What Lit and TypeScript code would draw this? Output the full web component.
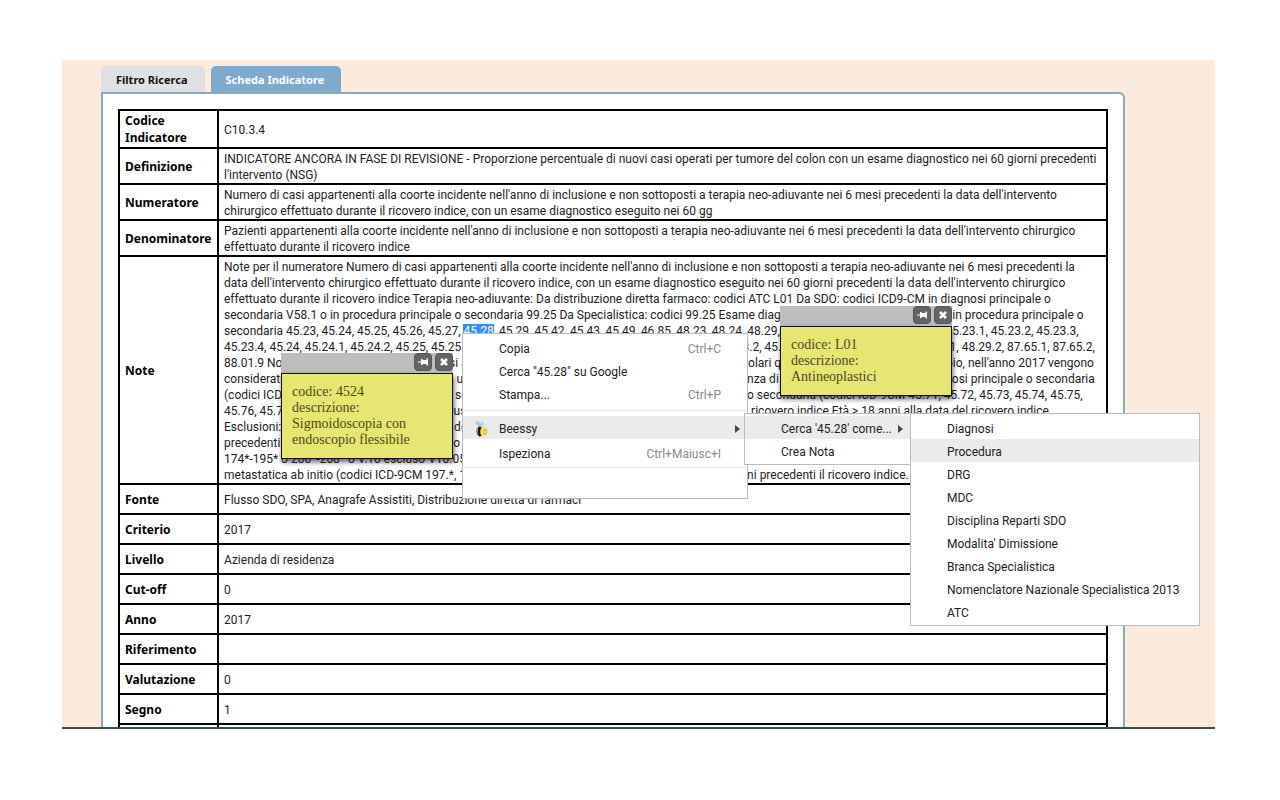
import { LitElement, html, css, svg, nothing } from "lit";
import { customElement, property } from "lit/decorators.js";
import { classMap } from "lit/directives/class-map.js";

interface Row {
  label: string;
  lines: unknown[];
}

interface MenuEntry {
  label: string;
  shortcut?: string;
  active?: boolean;
  submenu?: boolean;
  icon?: unknown;
}

const bee = svg`
  <ellipse cx="4.500" cy="2.800" rx="3.600" ry="1.900" transform="rotate(30 4.500 2.800)" fill="#a9cfdb"/>
  <ellipse cx="8.400" cy="3" rx="1.500" ry="2.600" fill="#b9d9e2"/>
  <path d="M5.500 5.500c-3.500 1-4 6-1.500 9l3.500 1-1-9z" fill="#3a3720"/>
  <path d="M4.200 7.200c-1 1.800-1 4.200 .2 6" stroke="#dccf62" stroke-width="1" fill="none"/>
  <ellipse cx="9.300" cy="10.600" rx="4.400" ry="4.600" fill="#eadf55"/>
  <path d="M6.800 6c-2.300 2.200-2.400 6.500-.4 9" stroke="#17160e" stroke-width="2.400" fill="none"/>
  <path d="M10 9.200h2.400M9.300 12.300c1.500.9 2.900.5 3.600-.6" stroke="#9c8c26" stroke-width=".8" fill="none"/>`;

const rows: Row[] = [
  { label: "Codice Indicatore", lines: ["C10.3.4"] },
  {
    label: "Definizione",
    lines: [
      "INDICATORE ANCORA IN FASE DI REVISIONE - Proporzione percentuale di nuovi casi operati per tumore del colon con un esame diagnostico nei 60 giorni precedenti",
      "l'intervento (NSG)",
    ],
  },
  {
    label: "Numeratore",
    lines: [
      "Numero di casi appartenenti alla coorte incidente nell'anno di inclusione e non sottoposti a terapia neo-adiuvante nei 6 mesi precedenti la data dell'intervento",
      "chirurgico effettuato durante il ricovero indice, con un esame diagnostico eseguito nei 60 gg",
    ],
  },
  {
    label: "Denominatore",
    lines: [
      "Pazienti appartenenti alla coorte incidente nell'anno di inclusione e non sottoposti a terapia neo-adiuvante nei 6 mesi precedenti la data dell'intervento chirurgico",
      "effettuato durante il ricovero indice",
    ],
  },
  {
    label: "Note",
    lines: [
      "Note per il numeratore Numero di casi appartenenti alla coorte incidente nell'anno di inclusione e non sottoposti a terapia neo-adiuvante nei 6 mesi precedenti la",
      "data dell'intervento chirurgico effettuato durante il ricovero indice, con un esame diagnostico eseguito nei 60 giorni precedenti la data dell'intervento chirurgico",
      "effettuato durante il ricovero indice Terapia neo-adiuvante: Da distribuzione diretta farmaco: codici ATC L01 Da SDO: codici ICD9-CM in diagnosi principale o",
      "secondaria V58.1 o in procedura principale o secondaria 99.25 Da Specialistica: codici 99.25 Esame diagnostico Da SDO codici ICD9-CM in procedura principale o",
      html`secondaria 45.23, 45.24, 45.25, 45.26, 45.27, <mark class="selection">45.28</mark>, 45.29, 45.42, 45.43, 45.49, 46.85, 48.23, 48.24, 48.29, 48.35, 48.36. Da Specialistica: 45.23.1, 45.23.2, 45.23.3,`,
      "45.23.4, 45.24, 45.24.1, 45.24.2, 45.25, 45.25.1, 45.26, 45.27, 45.28, 45.28.1, 45.29.1, 45.29.2, 45.43.2, 45.44, 45.49, 45.49.1, 48.23, 48.29.1, 48.29.2, 87.65.1, 87.65.2,",
      "88.01.9 Note per tutti denominatore dei casi appartenenti incidente considerano i operati nei particolari quali tumori e casi sedi ad esempio, nell'anno 2017 vengono",
      "considerati i ricoveri solo in per tumore con un intervento per tumore del in ordinario o con la presenza di tumore colon in delle diag diagnosi principale o secondaria",
      "(codici ICD-9CM 153.*) sede o diagnosi del sede principale intervento regime procedura principale o secondaria (codici ICD-9CM 45.71, 45.72, 45.73, 45.74, 45.75,",
      "45.76, 45.79, 45.8, 48.5, codici e o Incl. esclusi i ricoveri dei residenti fuori casi con ammissione del ricovero indice Età > 18 anni alla data del ricovero indice.",
      "Esclusioni: ricoveri un tumore del colon nei dei cinque anni",
      "precedenti il ricovero indice per tumore del o e pazienti con",
      "174*-195* o 200*-208* o V.10 escluso V10.05 nei",
      "metastatica ab initio (codici ICD-9CM 197.*, 198.*) nel ricovero nei ricoveri dei cinque dodici per anni precedenti il ricovero indice.",
    ],
  },
  { label: "Fonte", lines: ["Flusso SDO, SPA, Anagrafe Assistiti, Distribuzione diretta di farmaci"] },
  { label: "Criterio", lines: ["2017"] },
  { label: "Livello", lines: ["Azienda di residenza"] },
  { label: "Cut-off", lines: ["0"] },
  { label: "Anno", lines: ["2017"] },
  { label: "Riferimento", lines: [] },
  { label: "Valutazione", lines: ["0"] },
  { label: "Segno", lines: ["1"] },
  { label: "", lines: [] },
];

@customElement("sticky-note")
class StickyNote extends LitElement {
  @property({ attribute: false }) lines: string[] = [];

  static styles = css`
    :host { display: block; width: 172px; }
    .bar { display: flex; justify-content: flex-end; gap: 3px; height: 20px; background: #bdbdbd; }
    .tool {
      display: grid; place-items: center; width: 18px; height: 18px; padding: 0;
      border: 1px solid #555; border-radius: 4px; background: #646464;
    }
    .tool svg { display: block; width: 12px; height: 12px; fill: #fff; }
    .body {
      padding: 10px; border: 1px solid #111; background: #e8e672;
      box-shadow: 1px 3px 5px rgba(0, 0, 0, 0.6);
      color: #4c4a1c; font: 14px/16px "Liberation Serif", serif;
    }
    .line { display: block; white-space: nowrap; }
  `;

  render() {
    return html`
      <div class="bar">
        <button class="tool" aria-label="Fissa nota">
          <svg viewBox="0 0 12 12"><path d="M1 5.500h3v-2.500h1.200l.8 1h3.500v-1.500h1.500v7h-1.500v-1.500h-3.500l-.8 1h-1.200v-2.500h-3z"/></svg>
        </button>
        <button class="tool" aria-label="Chiudi nota">
          <svg viewBox="0 0 12 12"><path d="M3 3l6 6M9 3l-6 6" stroke="#fff" stroke-width="2.600"/></svg>
        </button>
      </div>
      <div class="body">${this.lines.map((l) => html`<span class="line">${l}</span>`)}</div>
    `;
  }
}

@customElement("app-root")
class AppRoot extends LitElement {
  static styles = css`
    :host {
      display: flex; box-sizing: border-box; height: 100vh; padding: 60px 65px 71px 62px;
      background: #fff; color: #222; font: 12px/16px Roboto, sans-serif;
    }
    .stage {
      position: relative; flex: 1; display: flex; flex-direction: column; min-width: 0;
      background: #fcebdc; border-bottom: 2px solid #3b504d;
    }
    .viewport { flex: 1; min-height: 0; overflow: hidden; padding: 6px 90px 0 39px; }
    .tabs { display: flex; gap: 6px; }
    .tab {
      height: 26px; padding: 0 17px 0 15px; border: 0; border-radius: 5px 5px 0 0;
      background: #dfe1e4; color: #111; font: bold 11px/28px "Noto Sans", sans-serif;
    }
    .tab.current { background: #7faad0; color: #fff; }
    .panel { border: 2px solid #8aaac2; border-radius: 0 6px 0 0; background: #fff; padding: 15px; }
    .sheet { width: 100%; border-collapse: collapse; table-layout: fixed; }
    .label-col { width: 99px; }
    th, td { box-sizing: border-box; height: 30px; border: 2px solid #000; text-align: left; vertical-align: middle; }
    th { padding: 1px 5px; color: #000; font: bold 12px/17px "Noto Sans", sans-serif; }
    td { padding: 2px 5px 0; }
    .line { display: block; white-space: nowrap; }
    .selection { background: #3390f5; color: #fff; }
    .note { position: absolute; }
    .note.first { left: 219px; top: 293px; }
    .note.second { left: 718px; top: 246px; }
    .menu {
      position: absolute; box-sizing: border-box; padding: 2px 0;
      border: 1px solid #b9bcbf; background: #fff; color: #222;
    }
    .menu.context { left: 400px; top: 273px; width: 286px; height: 166px; }
    .menu.beessy { left: 682px; top: 353px; width: 167px; }
    .menu.lookup { left: 848px; top: 353px; width: 290px; }
    .item {
      display: grid; grid-template-columns: 36px 1fr auto; align-items: center; width: 100%; height: 23px;
      padding: 2px 26px 0 0; border: 0; background: none; color: inherit; font: inherit; text-align: left; white-space: nowrap;
    }
    .item.active { background: #ebebeb; }
    .item.parent { padding-right: 7px; }
    .shortcut { color: #8a8a8a; }
    .icon { display: grid; justify-content: center; }
    .icon svg { display: block; width: 15px; height: 16px; }
    .arrow { width: 5px; height: 8px; fill: #444; }
    .rule { height: 1px; margin: 5px 1px; border: 0; background: #e3e3e3; }
    .rule.tight { margin: 3px 1px; }
    .gap { height: 2px; }
  `;

  private item(e: MenuEntry) {
    return html`<button class=${classMap({ item: true, active: !!e.active, parent: !!e.submenu })} role="menuitem">
      <span class="icon">${e.icon ? html`<svg viewBox="0 0 15 16">${e.icon}</svg>` : nothing}</span>
      <span>${e.label}</span>
      ${e.shortcut ? html`<span class="shortcut">${e.shortcut}</span>` : nothing}
      ${e.submenu ? html`<svg class="arrow" viewBox="0 0 5 8"><path d="M0 0l5 4l-5 4z"/></svg>` : nothing}
    </button>`;
  }

  render() {
    const lookups = [
      "Diagnosi", "Procedura", "DRG", "MDC", "Disciplina Reparti SDO", "Modalita' Dimissione",
      "Branca Specialistica", "Nomenclatore Nazionale Specialistica 2013", "ATC",
    ];
    return html`
      <main class="stage">
        <div class="viewport">
          <div class="tabs" role="tablist">
            <button class="tab" role="tab">Filtro Ricerca</button>
            <button class="tab current" role="tab" aria-selected="true">Scheda Indicatore</button>
          </div>
          <section class="panel">
            <table class="sheet">
              <colgroup><col class="label-col" /><col /></colgroup>
              <tbody>
                ${rows.map((r) => html`<tr>
                  <th scope="row">${r.label}</th>
                  <td>${r.lines.map((l) => html`<span class="line">${l}</span>`)}</td>
                </tr>`)}
              </tbody>
            </table>
          </section>
        </div>
        <sticky-note class="note first" .lines=${["codice: 4524", "descrizione:", "Sigmoidoscopia con", "endoscopio flessibile"]}></sticky-note>
        <sticky-note class="note second" .lines=${["codice: L01", "descrizione:", "Antineoplastici"]}></sticky-note>
        <div class="menu context" role="menu">
          ${this.item({ label: "Copia", shortcut: "Ctrl+C" })}
          ${this.item({ label: 'Cerca "45.28" su Google' })}
          ${this.item({ label: "Stampa...", shortcut: "Ctrl+P" })}
          <hr class="rule" />
          ${this.item({ label: "Beessy", active: true, submenu: true, icon: bee })}
          <div class="gap"></div>
          ${this.item({ label: "Ispeziona", shortcut: "Ctrl+Maiusc+I" })}
          <hr class="rule tight" />
        </div>
        <div class="menu beessy" role="menu">
          ${this.item({ label: "Cerca '45.28' come...", active: true, submenu: true })}
          ${this.item({ label: "Crea Nota" })}
        </div>
        <div class="menu lookup" role="menu">
          ${lookups.map((label) => this.item({ label, active: label === "Procedura" }))}
        </div>
      </main>
    `;
  }
}
